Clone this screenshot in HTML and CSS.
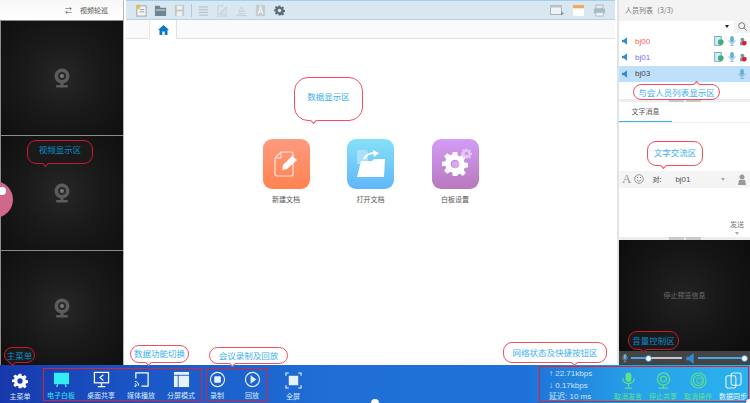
FILE: index.html
```html
<!DOCTYPE html>
<html lang="zh-CN">
  <head>
    <meta charset="UTF-8" />
    <title>视频会议</title>
    <link rel="stylesheet" href="styles.css">
  </head>

  <body>
    <svg class="defs" width="0" height="0">
      <symbol id="cam" viewBox="0 0 16 20">
        <circle cx="8" cy="8" r="7.5" fill="#5c5c5c"/>
        <circle cx="8" cy="8" r="4" fill="#2a2a2a"/>
        <circle cx="8" cy="8" r="2" fill="#777"/>
        <rect x="6.5" y="15" width="3" height="2" fill="#5c5c5c"/>
        <rect x="2" y="17" width="12" height="2.5" rx="1" fill="#5c5c5c"/>
      </symbol>
      <symbol id="gear" viewBox="0 0 24 24">
        <path fill="currentColor" fill-rule="evenodd" d="M10 1h4l.6 3.2 1.9.8 2.7-1.9 2.8 2.8-1.9 2.7.8 1.9 3.1.5v4l-3.1.6-.8 1.9 1.9 2.7-2.8 2.8-2.7-1.9-1.9.8L14 23h-4l-.6-3.1-1.9-.8-2.7 1.9L2 18.2l1.9-2.7-.8-1.9L0 14v-4l3.1-.5.8-1.9L2 4.9l2.8-2.8 2.7 1.9 1.9-.8zM12 8a4 4 0 1 0 0 8 4 4 0 0 0 0-8z"/>
      </symbol>
      <symbol id="mic" viewBox="0 0 12 16">
        <rect x="3" y="0" width="6" height="10" rx="3" fill="#6aaed6"/>
        <path d="M1 7c0 6 10 6 10 0M6 12v3M3 15.500h6" fill="none" stroke="#6aaed6" stroke-width="1.400"/>
      </symbol>
      <symbol id="sheet" viewBox="0 0 14 14">
        <rect x="1" y="0.500" width="9" height="12.500" fill="#d7ebf6" stroke="#4a93bd"/>
        <circle cx="9.500" cy="8.500" r="4" fill="#3fae6a"/>
      </symbol>
      <symbol id="blocked" viewBox="0 0 12 14">
        <circle cx="5" cy="4" r="3" fill="#7a97ad"/>
        <rect x="1.500" y="7" width="7" height="6" fill="#7a97ad"/>
        <circle cx="8" cy="9.500" r="3.800" fill="#e01f2a"/>
      </symbol>
      <symbol id="spk" viewBox="0 0 8 12">
        <path fill="#2a8fd8" d="M0 4h3l5-4v12L3 8H0z"/>
      </symbol>
    </svg>

    <div class="app">
      <div class="workspace">
        <aside class="left-col">
          <div class="left-head"><span class="swap">⇄</span><span>视频轮巡</span></div>
          <div class="pane"><svg class="cam-ico"><use href="#cam"/></svg></div>
          <div class="pane"><svg class="cam-ico"><use href="#cam"/></svg></div>
          <div class="pane"><svg class="cam-ico"><use href="#cam"/></svg></div>
        </aside>

        <main class="center-col">
          <div class="toolbar">
            <svg class="tool" viewBox="0 0 14 14"><rect x="2" y="2" width="10" height="11" fill="#f4f4f0" stroke="#9aa5ab"/><circle cx="3.500" cy="3" r="2.500" fill="#e6bd5a"/><path d="M5 6h5M5 8.500h5" stroke="#9aa5ab"/></svg>
            <svg class="tool" viewBox="0 0 14 14"><path fill="#6f8591" d="M1 2h5l1 2h6v9H1z"/><path fill="#dfe8ec" d="M2 6h10v1H2z"/></svg>
            <svg class="tool" viewBox="0 0 14 14"><rect x="2" y="1" width="10" height="12" fill="#c4c8c9"/><rect x="4" y="2" width="6" height="4" fill="#edf1f2"/><rect x="4" y="8" width="6" height="5" fill="#edf1f2"/></svg>
            <i class="tool-sep"></i>
            <svg class="tool" viewBox="0 0 14 14"><path d="M2 3h10M2 6h10M2 9h10M2 12h10" stroke="#bcc4c8" stroke-width="1.300"/></svg>
            <svg class="tool" viewBox="0 0 14 14"><path fill="none" stroke="#c6cccf" d="M11 6v5H2V2h6M5 9l6-6 1 1-6 6zM1 13h12"/></svg>
            <svg class="tool" viewBox="0 0 14 14"><path fill="none" stroke="#c6cccf" d="M7 3l3 5H4zM1 12.500h12M3 10.500h8"/></svg>
            <svg class="tool" viewBox="0 0 14 14"><rect x="2" y="1" width="10" height="12" fill="#c6cccf"/><path d="M4.500 11L7 3l2.500 8M5.500 8.500h3" fill="none" stroke="#eef3f5" stroke-width="1.200"/></svg>
            <svg class="tool gear-tool"><use href="#gear"/></svg>
            <div class="toolbar-right">
              <svg class="tool wide" viewBox="0 0 14 12"><rect x="0.500" y="1" width="11" height="9" fill="#eef2f3" stroke="#a9b5bb"/><path d="M0 1h12v2H0z" fill="#b9c6cc"/><path d="M11 7l3 2-3 2z" fill="#7f929c"/></svg>
              <svg class="tool" viewBox="0 0 12 12"><rect x="1" y="1" width="10" height="10" fill="#fff"/><rect x="1" y="1" width="10" height="3" fill="#eda75a"/></svg>
              <svg class="tool" viewBox="0 0 14 14"><rect x="3" y="1" width="8" height="4" fill="#dfe8ec" stroke="#a9bcc6"/><rect x="1" y="5" width="12" height="5" fill="#a9bcc6"/><rect x="3" y="9" width="8" height="4" fill="#eef3f5" stroke="#a9bcc6"/></svg>
            </div>
          </div>
          <div class="tabs">
            <div class="tab-home">
              <svg width="11" height="10" viewBox="0 0 11 10"><path fill="#0a78c8" d="M5.500 0L11 5H9.500v5H6.700V6.500H4.300V10H1.500V5H0z"/></svg>
            </div>
          </div>
          <div class="launch">
            <div class="launch-item">
              <div class="launch-ico orange">
                <svg width="24" height="26" viewBox="0 0 24 26"><path d="M7 1h10a2 2 0 0 1 2 2v20a2 2 0 0 1-2 2H3a2 2 0 0 1-2-2V7z" fill="none" stroke="#ffe6da" stroke-width="1.200"/><path d="M7 1v6H1" fill="none" stroke="#ffe6da"/><path fill="#fff" d="M8 19l1-5 9-9 5 4-10 9z"/></svg>
              </div>
              <span>新建文档</span>
            </div>
            <div class="launch-item">
              <div class="launch-ico blue">
                <svg width="30" height="28" viewBox="0 0 30 28"><path fill="#a9e0fb" d="M1 0h9l2 2v12H1z"/><path fill="#fff" d="M5 11h11l2-2h11l-1 18H1z"/><path d="M8 9c2-4 5-6 10-6" fill="none" stroke="#fff" stroke-width="2"/><path fill="#fff" d="M17 0l6 3-5 4z"/></svg>
              </div>
              <span>打开文档</span>
            </div>
            <div class="launch-item">
              <div class="launch-ico purple">
                <svg class="launch-gear"><use href="#gear"/></svg>
                <svg class="small-gear"><use href="#gear"/></svg>
                <i class="gear-hub"></i>
              </div>
              <span>白板设置</span>
            </div>
          </div>
        </main>

        <aside class="right-col">
          <div class="people-head">人员列表（3/3）</div>
          <div class="people-search">
            <div class="search-select"><i class="caret"></i></div>
            <svg width="9" height="9" viewBox="0 0 9 9"><circle cx="3.700" cy="3.700" r="3" fill="none" stroke="#777"/><path d="M6 6l2.700 2.700" stroke="#777"/></svg>
          </div>
          <div class="person">
            <svg class="p-spk"><use href="#spk"/></svg><span class="p-name red">bj00</span>
            <svg class="p-a"><use href="#sheet"/></svg><svg class="p-b"><use href="#mic"/></svg><svg class="p-c"><use href="#blocked"/></svg>
          </div>
          <div class="person">
            <svg class="p-spk"><use href="#spk"/></svg><span class="p-name violet">bj01</span>
            <svg class="p-a"><use href="#sheet"/></svg><svg class="p-b"><use href="#mic"/></svg><svg class="p-c"><use href="#blocked"/></svg>
          </div>
          <div class="person selected">
            <svg class="p-spk"><use href="#spk"/></svg><span class="p-name">bj03</span>
            <svg class="p-b only"><use href="#mic"/></svg>
          </div>
          <div class="people-rest"></div>
          <div class="grip-row"><i></i><i></i></div>
          <div class="chat-tabs"><span class="chat-tab">文字消息</span></div>
          <div class="chat-log"></div>
          <div class="chat-tools">
            <span class="font-a">A</span>
            <svg width="10" height="10" viewBox="0 0 10 10"><circle cx="5" cy="5" r="4.300" fill="none" stroke="#999"/><path d="M3 6c1 1.500 3 1.500 4 0M3 3.500h1M6 3.500h1" fill="none" stroke="#999"/></svg>
            <span class="to-label">对:</span>
            <span class="to-name">bj01</span>
            <i class="caret light"></i>
            <svg width="10" height="11" viewBox="0 0 10 11"><circle cx="5" cy="3" r="2.500" fill="#999"/><path fill="#999" d="M1 11l1-5h6l1 5z"/></svg>
          </div>
          <div class="chat-input">
            <span class="send">发送</span>
            <i class="caret light"></i>
          </div>
          <div class="grip-row"><i></i><i></i></div>
          <div class="preview"><span>停止预览信息</span></div>
          <div class="volume">
            <svg class="vol-mic"><use href="#mic"/></svg>
            <div class="slider short"><i class="knob"></i></div>
            <svg class="vol-spk"><use href="#spk"/></svg>
            <div class="slider full"><i class="knob"></i></div>
          </div>
        </aside>
      </div>

      <footer class="bottom-bar">
        <div class="bar-item first">
          <svg class="b-gear"><use href="#gear"/></svg>
          <span>主菜单</span>
        </div>
        <div class="bar-group data-group">
          <div class="bar-item active">
            <svg class="b-ico" viewBox="0 0 18 18"><rect x="1" y="3" width="16" height="11" fill="#34ecf2"/><path d="M1 2.500h16M5 14l-1 3M13 14l1 3" stroke="#34ecf2" stroke-width="1.500"/></svg>
            <span>电子白板</span>
          </div>
          <div class="bar-item">
            <svg class="b-ico" viewBox="0 0 18 18"><rect x="1.500" y="1.500" width="15" height="11" fill="none" stroke="#fff" stroke-width="1.300"/><path d="M11 4L7.500 7l3.500 3" fill="none" stroke="#fff" stroke-width="1.300"/><path d="M9 13v2.500M5 16.500h8" stroke="#fff" stroke-width="1.500"/></svg>
            <span>桌面共享</span>
          </div>
          <div class="bar-item">
            <svg class="b-ico" viewBox="0 0 18 18"><path d="M3 8V2h13v14H9" fill="none" stroke="#fff" stroke-width="1.300"/><path d="M2 11c2.500 0 4 2 4 4.500M2 13.500c1 0 2 1 2 2" fill="none" stroke="#fff"/><circle cx="2.500" cy="16" r="1" fill="#fff"/></svg>
            <span>媒体播放</span>
          </div>
          <div class="bar-item">
            <svg class="b-ico" viewBox="0 0 18 18"><rect x="1" y="1" width="16" height="3" fill="#e8f2fd"/><rect x="1" y="5" width="4" height="12" fill="#e8f2fd"/><rect x="6" y="5" width="11" height="12" fill="#e8f2fd"/></svg>
            <span>分屏模式</span>
          </div>
        </div>
        <div class="bar-group rec-group">
          <div class="bar-item small">
            <svg class="b-ico" viewBox="0 0 18 18"><circle cx="9" cy="9" r="7.500" fill="none" stroke="#e8f2fd" stroke-width="1.200"/><rect x="5.500" y="5.500" width="7" height="7" rx="1" fill="#e8f2fd"/></svg>
            <span>录制</span>
          </div>
          <div class="bar-item small">
            <svg class="b-ico" viewBox="0 0 18 18"><circle cx="9" cy="9" r="7.500" fill="none" stroke="#e8f2fd" stroke-width="1.200"/><path d="M7 4.500L13 9l-6 4.500z" fill="#e8f2fd"/></svg>
            <span>回放</span>
          </div>
        </div>
        <div class="bar-item full-btn">
          <svg class="b-ico" viewBox="0 0 18 18"><rect x="4" y="4" width="10" height="10" fill="#e8f2fd"/><path d="M1 4V1h3M14 1h3v3M17 14v3h-3M4 17H1v-3" fill="none" stroke="#e8f2fd" stroke-width="1.200"/></svg>
          <span>全屏</span>
        </div>
        <div class="bar-group net-group">
          <div class="net-stats">
            <div>↑ 22.71kbps</div>
            <div>↓ 0.17kbps</div>
            <div>延迟: 10 ms</div>
          </div>
          <div class="bar-item green">
            <svg class="b-ico" viewBox="0 0 18 18"><rect x="6" y="0.500" width="6" height="10" rx="3" fill="#62e08a"/><path d="M3 7c0 7 12 7 12 0M9 13v3M5 17h8" fill="none" stroke="#62e08a" stroke-width="1.300"/></svg>
            <span>取消发言</span>
          </div>
          <div class="bar-item green">
            <svg class="b-ico" viewBox="0 0 18 18"><circle cx="9" cy="7.500" r="6.500" fill="none" stroke="#62e08a" stroke-width="1.300"/><circle cx="9" cy="7.500" r="3" fill="none" stroke="#62e08a" stroke-width="1.300"/><path d="M4 17h10M9 14v3" stroke="#62e08a" stroke-width="1.300"/></svg>
            <span>停止共享</span>
          </div>
          <div class="bar-item green">
            <svg class="b-ico" viewBox="0 0 18 18"><circle cx="9" cy="9" r="8" fill="none" stroke="#62e08a" stroke-width="1.100"/><circle cx="9" cy="9" r="5.500" fill="none" stroke="#62e08a" stroke-width="1.100"/><circle cx="10" cy="9" r="3" fill="none" stroke="#62e08a"/></svg>
            <span>取消操作</span>
          </div>
          <div class="bar-item plain">
            <svg class="b-ico" viewBox="0 0 18 18"><rect x="6.500" y="1" width="10.500" height="13" rx="2" fill="none" stroke="#e8f2fd" stroke-width="1.200"/><rect x="1" y="4" width="10.500" height="13" rx="2" fill="none" stroke="#e8f2fd" stroke-width="1.200"/></svg>
            <span>数据同步</span>
          </div>
        </div>
      </footer>

      <!-- annotations drawn over the screenshot -->
      <div class="note n-data">数据显示区</div>
      <div class="note dark n-video">视频显示区</div>
      <div class="note dark n-menu">主菜单</div>
      <div class="note n-switch">数据功能切换</div>
      <div class="note n-rec">会议录制及回放</div>
      <div class="note n-net">网络状态及快捷按钮区</div>
      <div class="note dark n-vol">音量控制区</div>
      <div class="note n-people">与会人员列表显示区</div>
      <div class="note n-chat">文字交流区</div>

      <i class="pink-dot"></i>
      <i class="white-dot d-left"></i>
      <i class="white-dot d-bottom"></i>
      <i class="white-dot d-right"></i>
    </div>
  </body>
</html>
```

FILE: styles.css
```css
body {
  margin: 0;
  font-family: "Noto Sans CJK SC", "Liberation Sans", sans-serif;
  font-size: 7px;
  color: #444;
  background: #fff;
}

.defs {
  position: absolute;
}

.app {
  position: relative;
  width: 750px;
  height: 403px;
  overflow: hidden;
  display: flex;
  flex-direction: column;
}

.workspace {
  flex: 1;
  display: flex;
  min-height: 0;
}

/* left video column */
.left-col {
  width: 124px;
  padding-left: 1px;
  box-sizing: border-box;
  border-right: 1px solid #b5b5b5;
  display: flex;
  flex-direction: column;
  background: #8c8c8c;
}

.left-head {
  height: 20px;
  margin-left: -1px;
  background: linear-gradient(#f7f7f7, #fff);
  display: flex;
  align-items: center;
  padding-left: 65px;
  gap: 9px;
  color: #555;
}

.swap {
  width: 6px;
  line-height: 1;
}

.pane {
  flex: 1;
  margin-top: 1px;
  display: flex;
  align-items: center;
  justify-content: center;
  background: radial-gradient(circle, #272727 0%, #1a1a1a 45%, #0f0f0f 100%);
}

.cam-ico {
  width: 16px;
  height: 20px;
}

/* center */
.center-col {
  flex: 1;
  margin-left: 2px;
  display: flex;
  flex-direction: column;
  min-width: 0;
}

.toolbar {
  height: 18px;
  background: #d9e8f0;
  border-top: 1px solid #9fd0ec;
  border-bottom: 1px solid #b9d3e2;
  display: flex;
  align-items: center;
  padding-left: 9px;
  gap: 6px;
}

.tool {
  width: 13px;
  height: 13px;
  flex: none;
}

.tool-sep {
  width: 1px;
  height: 13px;
  background: #b5c7d1;
  margin: 0 -1px;
}

.gear-tool {
  color: #5a6e7a;
  width: 11px;
  height: 11px;
  margin-left: 1px;
}

.toolbar-right {
  margin-left: auto;
  display: flex;
  gap: 8px;
  padding-right: 9px;
  align-items: center;
}

.tool.wide {
  width: 14px;
}

.tabs {
  height: 18px;
  background: #fafafa;
  border-bottom: 1px solid #e2e2e2;
  padding-left: 23px;
  display: flex;
}

.tab-home {
  width: 28px;
  height: 19px;
  background: #fff;
  border-left: 1px solid #e9e9e9;
  border-right: 1px solid #e2e2e2;
  display: flex;
  align-items: center;
  justify-content: center;
  box-sizing: border-box;
}

.launch {
  flex: 1;
  display: flex;
  justify-content: center;
  gap: 37.5px;
  padding-top: 100px;
}

.launch-item {
  width: 47px;
  display: flex;
  flex-direction: column;
  align-items: center;
  gap: 5px;
  white-space: nowrap;
  color: #555;
}

.launch-ico {
  position: relative;
  width: 47px;
  height: 50px;
  border-radius: 9px;
  display: flex;
  align-items: center;
  justify-content: center;
}

.orange {
  background: linear-gradient(#ff9a80, #ff8350);
}

.blue {
  background: linear-gradient(#85e0f8, #61b6f8);
}

.purple {
  background: linear-gradient(#d39cf6, #b878bd);
}

.launch-gear {
  width: 26px;
  height: 26px;
  color: #fff;
}

.small-gear {
  position: absolute;
  right: 7px;
  top: 9px;
  width: 11px;
  height: 11px;
  color: #e3c6f5;
}

.gear-hub {
  position: absolute;
  left: 20px;
  top: 21.500px;
  width: 7px;
  height: 7px;
  border-radius: 50%;
  background: #d9a9ef;
}

/* right column */
.right-col {
  width: 131px;
  margin-left: 2px;
  border-left: 2px solid #e3e3e3;
  display: flex;
  flex-direction: column;
}

.people-head {
  height: 20px;
  line-height: 20px;
  padding-left: 6px;
  background: #f3f3f3;
  color: #777;
}

.people-search {
  height: 13px;
  background: #f3f3f3;
  display: flex;
  align-items: center;
  gap: 4px;
}

.search-select {
  flex: 1;
  height: 12px;
  background: #fff;
  display: flex;
  align-items: center;
  justify-content: flex-end;
  padding-right: 5px;
}

.people-search svg {
  margin-right: 3px;
}

.caret {
  display: block;
  width: 0;
  height: 0;
  border: 2.500px solid transparent;
  border-top: 3px solid #222;
  border-bottom: 0;
}

.caret.light {
  border-top-color: #aaa;
}

.person {
  height: 16.300px;
  display: flex;
  align-items: center;
  padding-left: 3px;
  font-size: 8px;
  font-family: "Liberation Sans", sans-serif;
}

.person.selected {
  background: #bfe0fb;
}

.p-spk {
  width: 5px;
  height: 8px;
}

.p-name {
  margin-left: 8px;
  flex: 1;
  color: #444;
}

.p-name.red {
  color: #ff5b5b;
}

.p-name.violet {
  color: #7a6cf0;
}

.p-a {
  width: 10px;
  height: 10px;
}

.p-b {
  width: 8px;
  height: 10px;
  margin-left: 4px;
}

.p-c {
  width: 8px;
  height: 9px;
  margin: 0 3px 0 3px;
}

.p-b.only {
  margin-right: 4px;
}

.people-rest {
  height: 17px;
}

.grip-row {
  height: 3px;
  background: #ededed;
  display: flex;
  justify-content: center;
  gap: 2px;
}

.grip-row i {
  width: 15px;
  background: #c9c9c9;
}

.chat-tabs {
  height: 20px;
  border-bottom: 1px solid #eee;
}

.chat-tab {
  display: block;
  width: 53px;
  box-sizing: border-box;
  height: 20px;
  line-height: 19px;
  text-align: center;
  border-bottom: 1px solid #45ade8;
  color: #555;
}

.chat-log {
  height: 48px;
}

.chat-tools {
  height: 17px;
  background: #f4f4f4;
  display: flex;
  align-items: center;
  padding-left: 3px;
}

.font-a {
  font-family: "Liberation Serif", serif;
  font-size: 13px;
  color: #999;
  margin-right: 3px;
}

.to-label {
  margin-left: 8px;
  width: 23px;
}

.to-name {
  flex: 1;
  font-size: 8px;
  font-family: "Liberation Sans", sans-serif;
  color: #555;
}

.chat-tools .caret {
  margin-right: 12px;
}

.chat-tools svg:last-child {
  margin-right: 3px;
}

.chat-input {
  height: 49px;
  display: flex;
  flex-direction: column;
  align-items: flex-end;
  justify-content: flex-end;
  padding: 0 6px 2px 0;
  box-sizing: border-box;
  color: #777;
  line-height: 10px;
  gap: 3px;
}

.chat-input .caret {
  margin-right: 5px;
}

.preview {
  flex: 1;
  display: flex;
  align-items: center;
  justify-content: center;
  background: radial-gradient(circle, #222 0%, #141414 60%, #0d0d0d 100%);
  color: #6e6e6e;
}

.volume {
  height: 14px;
  background: #444;
  display: flex;
  align-items: center;
  padding-left: 3px;
}

.vol-mic {
  width: 6px;
  height: 10px;
  flex: none;
}

.vol-spk {
  width: 8px;
  height: 11px;
  flex: none;
}

.slider {
  position: relative;
  height: 1.500px;
  flex: none;
}

.slider.short {
  width: 51px;
  margin: 0 4px 0 3px;
  background: linear-gradient(90deg, #4aa8e8 33%, #c8c8c8 33%);
}

.slider.full {
  width: 47px;
  margin-left: 4px;
  background: #4aa8e8;
}

.knob {
  position: absolute;
  top: -2px;
  width: 5px;
  height: 5px;
  border-radius: 50%;
  background: #fff;
  border: 1px solid #2f8fd4;
}

.short .knob {
  left: 14px;
}

.full .knob {
  right: -3px;
}

/* bottom bar */
.bottom-bar {
  height: 38px;
  flex: none;
  display: flex;
  align-items: stretch;
  background: linear-gradient(90deg, #1738ab 0%, #1a56c6 18%, #1f6fd6 45%, #1f70d8 70%, #27a2e8 85%, #2ab2ef 100%);
  color: #d9e8f8;
}

.bar-group {
  display: flex;
  box-sizing: border-box;
  border: 1px solid #d3263a;
  margin: 3px 0 2px;
  height: 33px;
}

.data-group {
  margin-left: 3px;
  width: 159px;
  gap: 6px;
  padding-right: 3px;
}

.rec-group {
  margin-left: 4px;
  width: 62px;
  gap: 15px;
}

.bar-item {
  width: 34px;
  flex: none;
  display: flex;
  flex-direction: column;
  align-items: center;
  white-space: nowrap;
  font-size: 7px;
  line-height: 11px;
}

.bar-item.first {
  width: 40px;
  padding-top: 8px;
}

.bar-item.small {
  width: 20px;
}

.bar-item.active {
  color: #34e3f2;
}

.bar-item.full-btn {
  margin-left: 8px;
  padding-top: 5px;
}

.b-gear {
  width: 16px;
  height: 16px;
  color: #fff;
  margin-bottom: 2px;
}

.b-ico {
  width: 17px;
  height: 17px;
  flex: none;
  margin-top: 2px;
  margin-bottom: 2px;
}

.net-group {
  margin-left: auto;
  margin-top: 1px;
  margin-right: 1px;
  height: 36px;
  width: 210px;
  gap: 5px;
}

.net-stats {
  flex: 1;
  padding: 1px 0 0 9px;
  font-family: "Liberation Sans", "Noto Sans CJK SC", sans-serif;
  font-size: 8px;
  line-height: 11.500px;
  color: #cfe6f8;
}

.net-group .bar-item {
  width: 30px;
  padding-top: 3px;
}

.bar-item.green {
  color: #66e08f;
}

.bar-item.plain {
  color: #f0f6fd;
}

/* callouts */
.note {
  position: absolute;
  box-sizing: border-box;
  border: 1px solid #f0505c;
  border-radius: 9px;
  background: #fff;
  color: #3bb0ee;
  font-size: 8.500px;
  text-align: center;
  line-height: 15px;
  white-space: nowrap;
}

.note::after {
  content: "";
  position: absolute;
  bottom: -3px;
  width: 4px;
  height: 4px;
  background: inherit;
  border-right: 1px solid #f0505c;
  border-bottom: 1px solid #f0505c;
  transform: rotate(45deg);
}

.note.dark {
  background: #1a1a1a;
  border-color: #c81a2a;
  color: #0a8cc8;
}

.note.dark::after {
  border-color: #c81a2a;
}

.n-data { left: 294px; top: 77px; width: 69px; height: 44px; padding-top: 11px; border-radius: 14px; }
.n-data::after { left: 16px; }
.n-video { left: 27px; top: 140px; width: 66px; height: 24px; padding-top: 1px; }
.n-video::after { left: 15px; }
.n-menu { left: 4px; top: 347px; width: 31px; height: 16px; }
.n-menu::after { left: 5px; }
.n-switch { left: 130px; top: 345px; width: 59px; height: 18px; }
.n-switch::after { left: 15px; }
.n-rec { left: 209px; top: 347px; width: 79px; height: 17px; }
.n-rec::after { left: 20px; }
.n-net { left: 503px; top: 342px; width: 104px; height: 21px; padding-top: 2px; }
.n-net::after { left: 68px; }
.n-vol { left: 628px; top: 331px; width: 51px; height: 19px; padding-top: 1px; }
.n-vol::after { left: 12px; }
.n-people { left: 633px; top: 84px; width: 87px; height: 16px; }
.n-people::after { left: 60px; bottom: auto; top: -3px; transform: rotate(225deg); }
.n-chat { left: 647px; top: 141px; width: 56px; height: 25px; padding-top: 3px; }
.n-chat::after { left: 13px; }

.pink-dot {
  position: absolute;
  left: -24px;
  top: 181px;
  width: 37px;
  height: 37px;
  border-radius: 50%;
  background: #d0688c;
}

.white-dot {
  position: absolute;
  width: 8px;
  height: 8px;
  border-radius: 50%;
  background: #fff;
}

.d-left { left: -2px; top: 187px; }
.d-bottom { left: 371px; top: 399px; }
.d-right { left: 746px; top: 399px; }
```
